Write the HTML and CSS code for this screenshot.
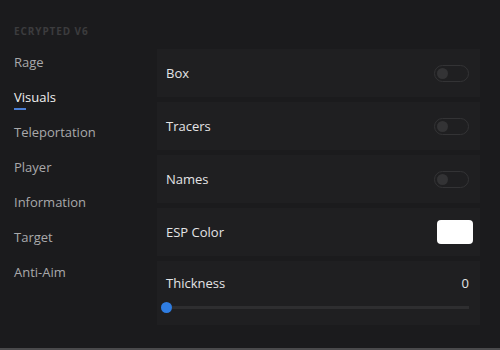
FILE: index.html
```html
<!DOCTYPE html>
<html>
<head>
<meta charset="utf-8">
<link rel="stylesheet" href="styles.css">
</head>
<body>
<div class="app">
  <aside class="sidebar">
    <div class="brand">ECRYPTED V6</div>
    <nav class="nav">
      <div class="nav-item">Rage</div>
      <div class="nav-item active">Visuals</div>
      <div class="nav-item">Teleportation</div>
      <div class="nav-item">Player</div>
      <div class="nav-item">Information</div>
      <div class="nav-item">Target</div>
      <div class="nav-item">Anti-Aim</div>
    </nav>
  </aside>
  <main class="content">
    <div class="card"><span class="label">Box</span><span class="toggle"><span class="knob"></span></span></div>
    <div class="card"><span class="label">Tracers</span><span class="toggle"><span class="knob"></span></span></div>
    <div class="card"><span class="label">Names</span><span class="toggle"><span class="knob"></span></span></div>
    <div class="card"><span class="label">ESP Color</span><span class="swatch"></span></div>
    <div class="card slider-card">
      <div class="slider-head"><span class="label">Thickness</span><span class="value">0</span></div>
      <div class="track"><span class="thumb"></span></div>
    </div>
  </main>
</div>
</body>
</html>
```
FILE: styles.css
```css
html, body {
  margin: 0;
  padding: 0;
  background: #1b1b1d;
  font-family: "Open Sans", "Noto Sans", sans-serif;
}
.app {
  display: flex;
  height: 348px;
  border-bottom: 2px solid #4a4a4c;
  overflow: hidden;
}
.sidebar {
  width: 143px;
  padding-left: 14px;
  padding-top: 24px;
  flex-shrink: 0;
}
.brand {
  font-size: 10px;
  font-weight: 700;
  color: #3c3c3e;
  letter-spacing: 0.9px;
  line-height: 14px;
  height: 14px;
}
.nav {
  display: flex;
  flex-direction: column;
  padding-top: 7px;
}
.nav-item {
  height: 35px;
  line-height: 35px;
  font-size: 13px;
  color: #a9a9ab;
  position: relative;
}
.nav-item.active {
  color: #f0f0f0;
}
.nav-item.active::after {
  content: "";
  position: absolute;
  left: 0;
  top: 28px;
  width: 12px;
  height: 2px;
  background: #4a7fd6;
}
.content {
  flex: 1;
  display: flex;
  flex-direction: column;
  gap: 5px;
  padding: 49px 20px 0 0;
}
.card {
  background: #1f1f21;
  height: 48px;
  display: flex;
  align-items: center;
  justify-content: space-between;
  padding: 0 11px 0 9px;
  box-sizing: border-box;
}
.label {
  font-size: 13px;
  color: #e4e4e6;
}
.toggle {
  width: 31px;
  height: 15px;
  border: 1.5px solid #333335;
  border-radius: 9px;
  display: flex;
  align-items: center;
  padding-left: 2px;
  box-sizing: content-box;
}
.knob {
  width: 11px;
  height: 11px;
  border-radius: 50%;
  background: #333335;
}
.swatch {
  width: 36px;
  height: 24px;
  background: #ffffff;
  border-radius: 4px;
  margin-right: -4px;
}
.slider-card {
  height: 64px;
  flex-direction: column;
  align-items: stretch;
  justify-content: flex-start;
  padding: 13px 11px 0 9px;
}
.slider-head {
  display: flex;
  justify-content: space-between;
  align-items: center;
  height: 18px;
}
.value {
  font-size: 13px;
  color: #e4e4e6;
}
.track {
  margin-top: 14px;
  height: 3px;
  background: #2e2e30;
  position: relative;
}
.thumb {
  position: absolute;
  left: -5px;
  top: -4px;
  width: 11px;
  height: 11px;
  border-radius: 50%;
  background: #2f7de2;
}
```
